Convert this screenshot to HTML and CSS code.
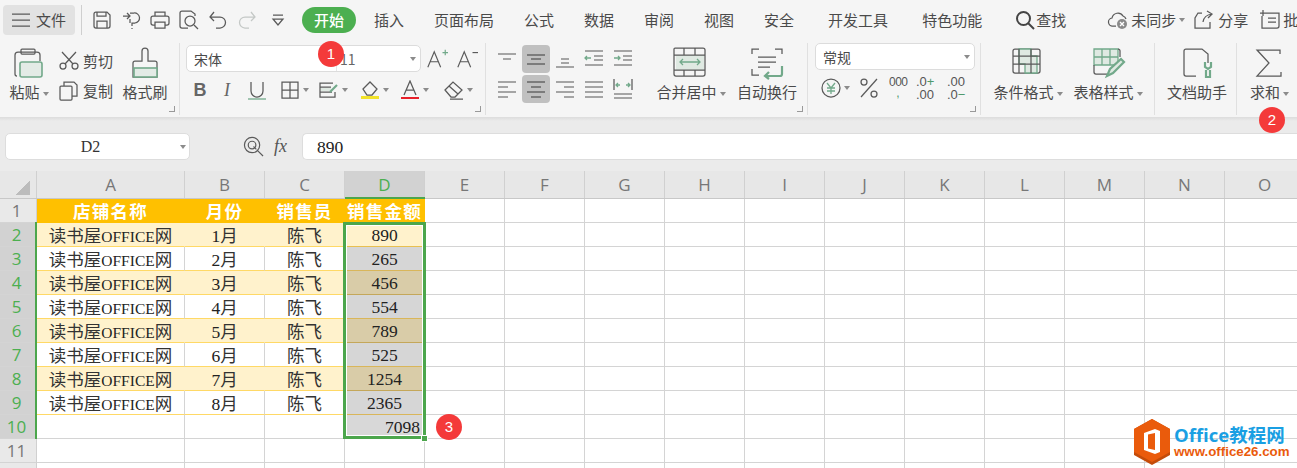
FILE: index.html
```html
<!DOCTYPE html>
<html lang="zh">
<head>
<meta charset="utf-8">
<title>WPS 表格</title>
<link rel="stylesheet" href="styles.css">
</head>
<body>
<header class="topbar">
  <div class="menu"><svg class="i18" viewBox="0 0 18 14"><path class="st" d="M0 1h18M0 7h18M0 13h18"/></svg><span>文件</span></div>
  <div class="vsep"></div>
  <div class="qa">
    <svg viewBox="0 0 20 20"><path class="st" d="M2 4q0-2 2-2h11l3 3v11q0 2-2 2H4q-2 0-2-2zM5 18v-7h10v7M5 2v4h9V2"/></svg>
    <svg viewBox="0 0 20 20"><path class="st" d="M2 6h7M6 3l3 3-3 3M9 3h4a5 5 0 0 1 1 10h-3v3M11 18v1M9 9v4"/></svg>
    <svg viewBox="0 0 20 20"><path class="st" d="M5 6V2h10v4M5 15H3q-2 0-2-2V8q0-2 2-2h14q2 0 2 2v5q0 2-2 2h-2M5 12h10v6H5z"/></svg>
    <svg viewBox="0 0 20 20"><path class="st" d="M9 18H3q-2 0-2-2V3q0-2 2-2h9l4 3v2"/><circle class="st" cx="11" cy="11" r="5"/><path class="st" d="M15 15l4 4"/></svg>
    <svg viewBox="0 0 20 20"><path class="st" d="M6 2L2 7l4 4M2 7h10a5 5 0 0 1 0 11H8"/></svg>
    <svg viewBox="0 0 20 20"><path class="st faint" d="M14 2l4 5-4 4M18 7H8a5 5 0 0 0 0 11h4"/></svg>
    <svg class="more" viewBox="0 0 20 20"><path class="st" d="M5 5h10M5 9l5 6 5-6z"/></svg>
  </div>
  <nav class="tabs">
    <span class="pill">开始</span>
    <span>插入</span><span>页面布局</span><span>公式</span><span>数据</span><span>审阅</span><span>视图</span><span>安全</span>
    <span class="wide">开发工具</span><span class="wide">特色功能</span>
  </nav>
  <div class="find"><svg viewBox="0 0 20 20"><circle class="st dark" cx="8.500" cy="8.500" r="6.500"/><path class="st dark" d="M13 13l6 6"/></svg><span>查找</span></div>
  <div class="sync"><svg viewBox="0 0 24 20"><path class="st" d="M9 16H6a4 4 0 0 1-1-8 6 6 0 0 1 11-2 5 5 0 0 1 3 3"/><circle class="gray" cx="15" cy="14" r="5"/><path class="wht" d="M13 12l4 4M17 12l-4 4"/></svg><span>未同步</span><i class="caret"></i></div>
  <div class="share"><svg viewBox="0 0 20 20"><path class="st" d="M8 3H4L1 8v10h15v-6M9 12q1-7 9-8M13 1l5 3-4 4"/></svg><span>分享</span></div>
  <div class="batch"><svg viewBox="0 0 22 20"><path class="st" d="M5 3h15v13q0 2-2 2H3V6M1 3h6M4 0v6M9 8h8M9 12h8"/></svg><span>批</span></div>
</header>

<section class="ribbon">
  <div class="grp g1">
    <div class="big w42">
      <svg viewBox="0 0 36 36"><path class="st" d="M6 30q-2 0-2-2V9q0-3 3-3h19q3 0 3 3v6"/><rect class="st" x="10" y="3" width="14" height="5" rx="1"/><rect class="gf" x="9" y="16" width="22" height="15" rx="2"/></svg>
      <div class="lab">粘贴<i class="caret"></i></div>
    </div>
    <div class="pair">
      <div class="row"><svg viewBox="0 0 20 20"><circle class="st" cx="4" cy="15" r="3"/><circle class="st" cx="16" cy="15" r="3"/><path class="st" d="M6 13L17 1M14 13L3 1"/></svg><span>剪切</span></div>
      <div class="row"><svg viewBox="0 0 20 20"><rect class="st" x="1" y="5" width="12" height="14" rx="1"/><path class="st" d="M5 5V1h10l3 3v11h-5"/></svg><span>复制</span></div>
    </div>
    <div class="big w46">
      <svg viewBox="0 0 36 36"><path class="st" d="M15 15V5q0-3 3-3t3 3v10h7q2 0 2 2v14H6V17q0-2 2-2z"/><rect class="gf" x="7" y="22" width="23" height="9"/></svg>
      <div class="lab">格式刷</div>
    </div>
    <i class="launch"></i>
  </div>

  <div class="grp g2">
    <div class="line1">
      <div class="select fontsel"><span class="fname">宋体</span><span class="fsize">11</span><i class="caret"></i></div>
      <svg class="aa" viewBox="0 0 24 24"><path class="st" d="M2 21L9 4l7 17M5 15h8"/><path class="stg" d="M18 5h6M21 2v6"/></svg>
      <svg class="aa" viewBox="0 0 24 24"><path class="st" d="M2 21L9 4l7 17M5 15h8"/><path class="st" d="M18 5h6"/></svg>
    </div>
    <div class="line2">
      <span class="bold">B</span>
      <span class="ital">I</span>
      <svg class="ic u" viewBox="0 0 20 20"><path class="st" d="M4 2v9a6 6 0 0 0 12 0V2"/><path class="stg" d="M1 19h18"/></svg>
      <div class="tool t1"><svg class="ic" viewBox="0 0 20 20"><path class="st" d="M2 2h16v16H2zM10 2v16M2 10h16"/></svg><i class="caret"></i></div>
      <div class="tool t2"><svg class="ic" viewBox="0 0 20 20"><path class="st" d="M14 3H1v14h15v-5M1 7h11M1 12h12"/><path class="gfl" d="M2 8h10v3H2z"/><path class="stg thick" d="M11 12l7-7"/></svg><i class="caret"></i></div>
      <div class="tool t3"><svg class="ic" viewBox="0 0 20 20"><path class="st" d="M3 9l7-7 7 7-5 6H7z"/><path class="yl" d="M1 16h18v3H1z"/></svg><i class="caret"></i></div>
      <div class="tool t4"><svg class="ic" viewBox="0 0 20 20"><path class="st" d="M4 15l6-14 6 14M6 10h8"/><path class="rd" d="M1 17h18v2H1z"/></svg><i class="caret"></i></div>
      <div class="tool t5"><svg class="ic" viewBox="0 0 20 20"><path class="st" d="M1 10l8-8 9 8-7 7H7zM5 6l9 8M6 19h13"/></svg><i class="caret"></i></div>
    </div>
    <i class="launch"></i>
  </div>

  <div class="grp g3">
    <div class="aligns">
      <svg viewBox="0 0 28 28"><path class="st s2" d="M5 9h18M10 14h8"/></svg>
      <svg class="on" viewBox="0 0 28 28"><path class="st s2" d="M5 10h18M9 14h10M5 19h18"/></svg>
      <svg viewBox="0 0 28 28"><path class="st s2" d="M10 14h8M10 18h8M5 22h18"/></svg>
      <svg viewBox="0 0 28 28"><path class="st s2" d="M5 6h18M14 11h9M14 15h9M5 20h18"/><path class="stg" d="M11 13H5M7 11l-2 2 2 2"/></svg>
      <svg viewBox="0 0 28 28"><path class="st s2" d="M5 6h18M14 11h9M14 15h9M5 20h18"/><path class="stg" d="M5 13h6M9 11l2 2-2 2"/></svg>
      <svg viewBox="0 0 28 28"><path class="st s2" d="M5 7h18M5 12h10M5 17h18M5 22h10"/></svg>
      <svg class="on" viewBox="0 0 28 28"><path class="st s2" d="M5 7h18M9 12h10M5 17h18M9 22h10"/></svg>
      <svg viewBox="0 0 28 28"><path class="st s2" d="M5 7h18M13 12h10M5 17h18M13 22h10"/></svg>
      <svg viewBox="0 0 28 28"><path class="st s2" d="M5 7h18M5 12h18M5 17h18M5 22h18"/></svg>
      <svg viewBox="0 0 28 28"><path class="st s2" d="M5 19h18M5 23h18"/><path class="st" d="M5 4v11M23 4v11"/><path class="stg" d="M7 10h4M9 8l-2 2 2 2M21 10h-4M19 8l2 2-2 2"/></svg>
    </div>
    <div class="big w70 merge">
      <svg viewBox="0 0 36 36"><rect class="gfl" x="3" y="9" width="28" height="15"/><path class="st" d="M1 3q0-1 1-1h28q2 0 2 2v24q0 2-2 2H3q-2 0-2-2zM1 9h31M1 24h31M11 2v7M22 2v7M11 24v6M22 24v6"/><path class="stg" d="M7 16h20M10 13l-3 3 3 3M24 13l3 3-3 3"/></svg>
      <div class="lab">合并居中<i class="caret"></i></div>
    </div>
    <div class="big w70 wrap">
      <svg viewBox="0 0 36 36"><path class="st" d="M10 3H3v5M26 3h7v5M3 23v6h7M9 11h18M9 16h18M9 21h12"/><path class="stg thick" d="M33 20v8q0 2-2 2H16M20 26l-4 4 4 3"/></svg>
      <div class="lab">自动换行</div>
    </div>
    <i class="launch"></i>
  </div>

  <div class="grp g4">
    <div class="select numsel"><span class="fname">常规</span><i class="caret"></i></div>
    <div class="numrow">
      <div class="tool yuan"><svg class="ic" viewBox="0 0 20 20"><circle class="st" cx="10" cy="10" r="9"/><path class="stg" d="M6 5l4 5 4-5M6 10h8M6 13h8M10 10v6"/></svg><i class="caret"></i></div>
      <svg class="ic pct" viewBox="0 0 20 20"><circle class="st" cx="5" cy="4" r="3"/><circle class="st" cx="15" cy="16" r="3"/><path class="st" d="M18 1L2 19"/></svg>
      <div class="thou"><span>000</span><b>,</b></div>
      <div class="dec"><span>.0<b>+</b></span><span>.00</span></div>
      <div class="dec"><span>.00</span><span>.0<b>−</b></span></div>
    </div>
    <i class="launch"></i>
  </div>

  <div class="grp g5">
    <div class="big w72">
      <svg viewBox="0 0 36 36"><rect class="st" x="3" y="3" width="27" height="24" rx="2"/><path class="gfl stg" d="M9 3h12v7h6v17H15v-9H9z"/><path class="st" d="M3 10h27M3 18h27M9 3v24M21 3v24"/></svg>
      <div class="lab">条件格式<i class="caret"></i></div>
    </div>
    <div class="big w72">
      <svg viewBox="0 0 36 36"><path class="gfl stg" d="M4 3h24v16H4z"/><path class="stg" d="M12 3v16M20 3v16M4 11h24"/><path class="st" d="M4 19v7q0 2 2 2h11M28 3q2 0 2 2v6"/><path class="gfl stg thick" d="M17 30l3-7 11-10 3 3-11 11z"/></svg>
      <div class="lab">表格样式<i class="caret"></i></div>
    </div>
  </div>

  <div class="grp g6">
    <div class="big w60">
      <svg viewBox="0 0 36 36"><path class="st" d="M17 30H7q-2 0-2-2V5q0-2 2-2h16l6 5v9"/><path class="stg thick" d="M26 16v5l3 2 3-2v-5M27 24v7h4v-7"/></svg>
      <div class="lab">文档助手</div>
    </div>
  </div>

  <div class="grp g7">
    <div class="big w60">
      <svg viewBox="0 0 36 36"><path class="st" d="M30 8V4H7l12 13L7 30h24v-4"/></svg>
      <div class="lab">求和<i class="caret"></i></div>
    </div>
  </div>
</section>

<section class="formula">
  <div class="namebox"><span>D2</span><i class="caret"></i></div>
  <svg class="zoomico" viewBox="0 0 22 22"><circle class="st" cx="9.500" cy="9.500" r="8"/><circle class="st" cx="9.500" cy="9.500" r="4"/><path class="st" d="M15 15l6 6M11 11l3 3"/></svg>
  <span class="fx">fx</span>
  <div class="input">890</div>
</section>

<main class="sheet">
  <div class="hdr">
    <div class="corner"><i></i></div>
    <div class="ch wa">A</div><div class="ch">B</div><div class="ch">C</div><div class="ch cur">D</div>
    <div class="ch">E</div><div class="ch">F</div><div class="ch">G</div><div class="ch">H</div><div class="ch">I</div><div class="ch">J</div><div class="ch">K</div><div class="ch">L</div><div class="ch">M</div><div class="ch">N</div><div class="ch">O</div>
  </div>
  <div class="r title"><div class="rh">1</div><div class="c wa">店铺名称</div><div class="c">月份</div><div class="c">销售员</div><div class="c">销售金额</div><div class="rest"></div></div>
  <div class="r even"><div class="rh on">2</div><div class="c wa"><span class="cn">读书屋</span><span class="lat">OFFICE</span><span class="cn">网</span></div><div class="c">1<span class="cn">月</span></div><div class="c"><span class="cn">陈飞</span></div><div class="c active">890</div><div class="rest"></div></div>
  <div class="r odd"><div class="rh on">3</div><div class="c wa"><span class="cn">读书屋</span><span class="lat">OFFICE</span><span class="cn">网</span></div><div class="c">2<span class="cn">月</span></div><div class="c"><span class="cn">陈飞</span></div><div class="c s">265</div><div class="rest"></div></div>
  <div class="r even"><div class="rh on">4</div><div class="c wa"><span class="cn">读书屋</span><span class="lat">OFFICE</span><span class="cn">网</span></div><div class="c">3<span class="cn">月</span></div><div class="c"><span class="cn">陈飞</span></div><div class="c s">456</div><div class="rest"></div></div>
  <div class="r odd"><div class="rh on">5</div><div class="c wa"><span class="cn">读书屋</span><span class="lat">OFFICE</span><span class="cn">网</span></div><div class="c">4<span class="cn">月</span></div><div class="c"><span class="cn">陈飞</span></div><div class="c s">554</div><div class="rest"></div></div>
  <div class="r even"><div class="rh on">6</div><div class="c wa"><span class="cn">读书屋</span><span class="lat">OFFICE</span><span class="cn">网</span></div><div class="c">5<span class="cn">月</span></div><div class="c"><span class="cn">陈飞</span></div><div class="c s">789</div><div class="rest"></div></div>
  <div class="r odd"><div class="rh on">7</div><div class="c wa"><span class="cn">读书屋</span><span class="lat">OFFICE</span><span class="cn">网</span></div><div class="c">6<span class="cn">月</span></div><div class="c"><span class="cn">陈飞</span></div><div class="c s">525</div><div class="rest"></div></div>
  <div class="r even"><div class="rh on">8</div><div class="c wa"><span class="cn">读书屋</span><span class="lat">OFFICE</span><span class="cn">网</span></div><div class="c">7<span class="cn">月</span></div><div class="c"><span class="cn">陈飞</span></div><div class="c s">1254</div><div class="rest"></div></div>
  <div class="r odd"><div class="rh on">9</div><div class="c wa"><span class="cn">读书屋</span><span class="lat">OFFICE</span><span class="cn">网</span></div><div class="c">8<span class="cn">月</span></div><div class="c"><span class="cn">陈飞</span></div><div class="c s">2365</div><div class="rest"></div></div>
  <div class="r blank"><div class="rh on">10</div><div class="c wa"></div><div class="c"></div><div class="c"></div><div class="c s sum">7098</div><div class="rest"></div></div>
  <div class="r blank"><div class="rh">11</div><div class="c wa"></div><div class="c"></div><div class="c"></div><div class="c"></div><div class="rest"></div></div>
  <div class="r blank"><div class="rh"></div><div class="c wa"></div><div class="c"></div><div class="c"></div><div class="c"></div><div class="rest"></div></div>

  <div class="rowmark"></div>
  <div class="colmark"></div>
  <div class="sel"></div>
  <div class="handle"></div>
</main>

<div class="badge b1">1</div>
<div class="badge b2">2</div>
<div class="badge b3">3</div>

<div class="mark">
  <svg viewBox="0 0 36 46"><path class="hexd" d="M18 0l18 10v26L18 46 0 36V10z"/><path class="hex" d="M18 0l18 10v23L18 43 0 33V10z"/><path class="off" d="M21 10l-11 4v17l11 4 5-2V12zM21 14v17l-7-1.500V15.500z"/></svg>
  <div class="marktxt"><div class="m1">Office教程网</div><div class="m2">www.office26.com</div></div>
</div>
</body>
</html>
```
FILE: styles.css
```css
* { box-sizing: border-box; }
html, body { margin: 0; padding: 0; }
body {
  width: 1297px; height: 468px; overflow: hidden; position: relative;
  background: #fff; color: #4a4a4a;
  font: 15px/20px "Noto Sans CJK SC", "Liberation Sans", sans-serif;
}
svg { display: block; flex: none; }
.st { fill: none; stroke: #5a5a5a; stroke-width: 1.25; }
.s2 { stroke: #8a8a8a; stroke-width: 1.5; }
.dark { stroke: #444; stroke-width: 2; }
.faint { stroke: #c4c8c6; }
.stg { fill: none; stroke: #72a98a; stroke-width: 1.3; }
.thick { stroke-width: 2.2; }
.gf { fill: #e3ebe6; stroke: #72a98a; stroke-width: 1.6; }
.gfl { fill: #dfe9e2; }
.gray { fill: #8a8a8a; }
.wht { stroke: #fff; stroke-width: 1.3; fill: none; }
.yl { fill: #f2e32a; }
.rd { fill: #e8202a; }
.caret {
  display: inline-block; width: 0; height: 0; flex: none;
  border: 3px solid transparent; border-top: 4px solid #8b8b8b; border-bottom: 0;
  margin-left: 3px; vertical-align: middle;
}

/* top bar */
.topbar { height: 40px; background: #f5f5f5; display: flex; align-items: center; padding-left: 3px; white-space: nowrap; overflow: hidden; }
.menu { width: 72px; height: 30px; background: #e2e2e2; border-radius: 4px; display: flex; align-items: center; justify-content: center; gap: 6px; flex: none; }
.i18 { width: 18px; height: 14px; }
.vsep { width: 1px; height: 30px; background: #cfcfcf; margin-left: 6px; flex: none; }
.qa { display: flex; gap: 9px; margin-left: 10px; flex: none; }
.qa svg { width: 20px; height: 20px; }
.qa .more { margin-left: 2px; }
.tabs { display: flex; gap: 30px; align-items: center; margin-left: 14px; flex: none; }
.pill { width: 54px; height: 26px; margin-right: -12px; border-radius: 13px; background: #4caf50; color: #fff; font-weight: 500; text-align: center; line-height: 26px; font-size: 15px; }
.wide { margin-left: 4px; }
.find { display: flex; align-items: center; gap: 1px; margin-left: 33px; flex: none; }
.find svg { width: 20px; height: 20px; }
.sync { display: flex; align-items: center; margin-left: 41px; flex: none; }
.sync svg { width: 24px; height: 20px; }
.share { display: flex; align-items: center; gap: 4px; margin-left: 9px; flex: none; }
.share svg { width: 20px; height: 20px; }
.batch { display: flex; align-items: center; gap: 2px; margin-left: 11px; flex: none; }
.batch svg { width: 22px; height: 20px; }

/* ribbon */
.ribbon { height: 77px; background: #f5f5f5; display: flex; }
.grp { position: relative; display: flex; margin: 3px 0 2px; border-right: 1px solid #e0e0e0; flex: none; }
.launch { position: absolute; right: 4px; bottom: 3px; width: 6px; height: 6px; border-right: 1.500px solid #999; border-bottom: 1.500px solid #999; }
.g1 { width: 180px; padding-left: 8px; }
.g2 { width: 306px; padding-left: 6px; flex-direction: column; }
.g3 { width: 322px; padding-left: 7px; }
.g4 { width: 173px; padding-left: 7px; flex-direction: column; }
.g5 { width: 174px; padding-left: 11px; gap: 8px; }
.g6 { width: 82px; padding-left: 12px; }
.g7 { width: 60px; border-right: 0; padding-left: 1px; }
.big { display: flex; flex-direction: column; align-items: center; padding-top: 3px; flex: none; white-space: nowrap; }
.big svg { width: 36px; height: 36px; }
.lab { height: 20px; }
.g7 .lab { margin-left: 3px; }
.w42 { width: 42px; }
.w46 { width: 46px; margin-left: 9px; }
.w70 { width: 70px; }
.w72 { width: 72px; }
.w60 { width: 60px; }
.pair { width: 54px; margin-left: 9px; padding-top: 3px; flex: none; }
.row { height: 30px; display: flex; align-items: center; gap: 4px; white-space: nowrap; }
.row svg { width: 20px; height: 20px; }
.select { height: 27px; background: #fff; border: 1px solid #dcdcdc; border-radius: 5px; display: flex; align-items: center; font-size: 14px; position: relative; }
.select .caret { position: absolute; right: 4px; top: 11px; }
.fname { padding: 1px 0 0 7px; }
.fontsel { width: 235px; }
.fontsel .fname { width: 150px; border-right: 1px solid #e6e6e6; height: 25px; line-height: 24px; }
.fsize { padding-left: 3px; color: #666; }
.numsel { width: 160px; }
.line1 { display: flex; margin-top: 2px; align-items: center; }
.aa { width: 22px; height: 24px; margin-left: 5px; }
.aa + .aa { margin-left: 8px; }
.line2 { display: flex; align-items: center; height: 28px; margin-top: 4px; padding-left: 4px; }
.ic { width: 20px; height: 20px; }
.bold { font: 700 18px/20px "Liberation Sans", sans-serif; color: #666; width: 20px; text-align: center; }
.ital { font: italic 18px/20px "Liberation Serif", serif; color: #666; width: 20px; text-align: center; margin-left: 7px; }
.u { margin-left: 10px; }
.tool { display: flex; align-items: center; flex: none; }
.t1 { margin-left: 13px; }
.t2 { margin-left: 10px; }
.t3 { margin-left: 12px; }
.t4 { margin-left: 11px; }
.t5 { margin-left: 15px; }
.aligns { display: grid; grid-template-columns: repeat(5, 28px); grid-auto-rows: 28px; column-gap: 1px; row-gap: 2px; margin-top: 2px; flex: none; align-self: flex-start; }
.aligns svg { width: 28px; height: 28px; border-radius: 4px; }
.aligns .on { background: #c0c0c0; }
.aligns .on .st { stroke: #666; }
.merge { margin-left: 19px; }
.wrap { margin-left: 6px; }
.numrow { display: flex; align-items: center; height: 28px; margin-top: 4px; padding-left: 6px; }
.pct { margin-left: 9px; }
.thou { width: 18px; margin-left: 10px; font: 12px/11px "Liberation Sans", sans-serif; text-align: center; color: #555; }
.thou span { display: block; letter-spacing: -0.500px; }
.thou b, .dec b { color: #4f9a6c; font-weight: 400; }
.thou b { display: block; height: 11px; }
.dec { width: 22px; margin-left: 9px; font: 13px/13px "Liberation Sans", sans-serif; color: #555; }
.dec span { display: block; white-space: nowrap; }

/* formula bar */
.formula { height: 54px; padding: 16px 0 0 5px; display: flex; background: linear-gradient(#dcdcdc, #ebebeb 4px); align-items: flex-start; }
.namebox { width: 185px; height: 27px; background: #fff; border: 1px solid #ddd; border-radius: 5px; position: relative; text-align: center; font: 16px/25px "Liberation Serif", serif; color: #333; padding-right: 14px; flex: none; }
.namebox .caret { position: absolute; right: 3px; top: 11px; }
.zoomico { width: 21px; height: 21px; margin: 3px 0 0 53px; }
.fx { font: italic 18px/27px "Liberation Serif", serif; color: #555; margin-left: 10px; width: 22px; flex: none; }
.input { flex: 1; height: 27px; margin-left: 6px; background: #fff; border: 1px solid #ddd; border-right: 0; border-radius: 5px 0 0 5px; padding-left: 14px; font: 17.500px/26px "Liberation Serif", serif; color: #222; }

/* sheet */
.sheet { position: relative; }
.hdr { display: flex; height: 28px; background: #e7e7e7; border-bottom: 1px solid #c8c8c8; }
.corner { width: 37px; border-right: 1px solid #d0d0d0; position: relative; flex: none; }
.corner i { position: absolute; right: 6px; bottom: 3px; width: 14px; height: 14px; background: linear-gradient(135deg, transparent 50%, #bcbcbc 50%); }
.ch { width: 80px; flex: none; border-right: 1px solid #d0d0d0; text-align: center; font: 17px/27px "Open Sans", sans-serif; color: #777; }
.ch.wa, .c.wa { width: 148px; }
.ch.cur { background: #d2d2d2; color: #4caf50; }
.r { display: flex; height: 24px; }
.rh { width: 37px; flex: none; background: #e9e9e9; border-right: 1px solid #d0d0d0; border-bottom: 1px solid #d4d4d4; text-align: center; font: 17px/23px "Open Sans", sans-serif; color: #777; padding-right: 3px; }
.rh.on { background: #d2d2d2; color: #4caf50; }
.c { width: 80px; flex: none; text-align: center; font: 17.500px/25px "Liberation Serif", serif; color: #222; border-right: 1px solid #d4d4d4; border-bottom: 1px solid #d4d4d4; white-space: nowrap; overflow: hidden; }
.cn { font: 17.500px/23px "Noto Sans CJK SC", sans-serif; color: #333; }
.lat { font-size: 15.500px; }
.rest { flex: 1; border-bottom: 1px solid #d4d4d4; background: repeating-linear-gradient(90deg, transparent 0 79px, #d4d4d4 79px 80px); }
.title .c { background: #ffc000; color: #fff; font: 700 17.500px/24px "Noto Sans CJK SC", sans-serif; letter-spacing: 1.200px; border-color: #ffc000; }
.even .c { background: #fff2cc; border-right-color: #fff2cc; border-bottom-color: #ffd966; }
.odd .c { border-bottom-color: #ffd966; }
.even .c.s { background: #d9cca8; border-color: #d9cca8; border-bottom-color: #c4a75a; }
.odd .c.s { background: #d6d6d6; border-bottom-color: #d9b65a; }
.even .c.active { border-bottom-color: #e8c050; }
.blank .c.s { background: #d8d8d8; }
.sum { text-align: right; padding-right: 4px; }
.rowmark { position: absolute; left: 35px; top: 51px; width: 2px; height: 217px; background: #4ca64c; }
.colmark { position: absolute; left: 345px; top: 26px; width: 80px; height: 2px; background: #4ca64c; }
.sel { position: absolute; left: 343px; top: 51px; width: 83px; height: 217px; border: 3px solid #4ca64c; outline: 1px solid #fff; outline-offset: -4px; }
.handle { position: absolute; left: 421px; top: 264px; width: 7px; height: 7px; background: #4ca64c; border: 1px solid #fff; }

/* callouts */
.badge { position: absolute; width: 26px; height: 26px; border-radius: 50%; background: #f43a3a; color: #fff; text-align: center; font: 15px/26px "Liberation Sans", sans-serif; }
.b1 { left: 318px; top: 41px; }
.b2 { left: 1259px; top: 107px; }
.b3 { left: 436px; top: 414px; }

/* watermark */
.mark { position: absolute; left: 1134px; top: 419px; display: flex; gap: 4px; }
.mark svg { width: 36px; height: 46px; }
.hex { fill: #ea5b0c; }
.hexd { fill: #c44c0a; }
.off { fill: #fff; fill-rule: evenodd; }
.marktxt { white-space: nowrap; padding-top: 5px; }
.m1 { font: 700 18.500px/21px "Open Sans", "Noto Sans CJK SC", sans-serif; color: #1a9fe3; }
.m2 { font: 700 13.300px/14px "Liberation Sans", sans-serif; color: #ea5b0c; }
```
